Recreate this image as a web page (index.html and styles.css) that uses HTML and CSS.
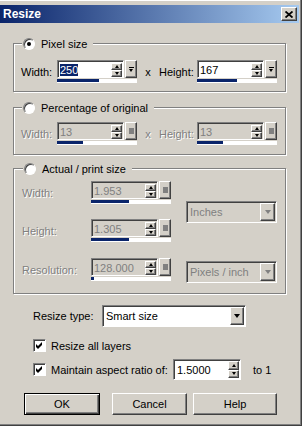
FILE: index.html
```html
<!DOCTYPE html>
<html lang="en">
<head>
    <meta charset="UTF-8">
    <title>Resize</title>
    <link rel="stylesheet" href="styles.css">
</head>
<body>
<div class="win">
    <div class="title">
        <span>Resize</span>
        <span class="close"><svg width="8" height="7" viewBox="0 0 8 7"><path d="M0.5 0.5L7.5 6.5M7.5 0.5L0.5 6.5" stroke="#000" stroke-width="1.8"/></svg></span>
    </div>
    <div class="body">
        <fieldset class="grp g1">
            <legend><span class="radio on"></span>Pixel size</legend>
            <div class="pair">
                <span class="lbl w1">Width:</span>
                <div class="ctl">
                    <div class="ctl-top">
                        <div class="field"><span class="val"><span class="sel">250</span></span><span class="spin"><b class="up"></b><b class="dn"></b></span></div>
                        <span class="pop"></span>
                    </div>
                    <div class="bar"><i style="width:42px"></i></div>
                </div>
                <span class="times">x</span>
                <span class="lbl w2">Height:</span>
                <div class="ctl">
                    <div class="ctl-top">
                        <div class="field"><span class="val">167</span><span class="spin"><b class="up"></b><b class="dn"></b></span></div>
                        <span class="pop"></span>
                    </div>
                    <div class="bar"><i style="width:40px"></i></div>
                </div>
            </div>
        </fieldset>

        <fieldset class="grp g2">
            <legend><span class="radio"></span>Percentage of original</legend>
            <div class="pair off">
                <span class="lbl w1">Width:</span>
                <div class="ctl">
                    <div class="ctl-top">
                        <div class="field"><span class="val">13</span><span class="spin"><b class="up"></b><b class="dn"></b></span></div>
                        <span class="pop"></span>
                    </div>
                    <div class="bar"><i style="width:26px"></i></div>
                </div>
                <span class="times">x</span>
                <span class="lbl w2">Height:</span>
                <div class="ctl">
                    <div class="ctl-top">
                        <div class="field"><span class="val">13</span><span class="spin"><b class="up"></b><b class="dn"></b></span></div>
                        <span class="pop"></span>
                    </div>
                    <div class="bar"><i style="width:26px"></i></div>
                </div>
            </div>
        </fieldset>

        <fieldset class="grp g3">
            <legend><span class="radio"></span>Actual / print size</legend>
            <div class="g3-body off">
                <div class="g3-left">
                    <div class="g3-row">
                        <span class="lbl w3">Width:</span>
                        <div class="ctl">
                            <div class="ctl-top">
                                <div class="field"><span class="val">1.953</span><span class="spin"><b class="up"></b><b class="dn"></b></span></div>
                                <span class="pop"></span>
                            </div>
                            <div class="bar"><i style="width:38px"></i></div>
                        </div>
                    </div>
                    <div class="g3-row">
                        <span class="lbl w3">Height:</span>
                        <div class="ctl">
                            <div class="ctl-top">
                                <div class="field"><span class="val">1.305</span><span class="spin"><b class="up"></b><b class="dn"></b></span></div>
                                <span class="pop"></span>
                            </div>
                            <div class="bar"><i style="width:38px"></i></div>
                        </div>
                    </div>
                    <div class="g3-row res">
                        <span class="lbl w3">Resolution:</span>
                        <div class="ctl">
                            <div class="ctl-top">
                                <div class="field"><span class="val">128.000</span><span class="spin"><b class="up"></b><b class="dn"></b></span></div>
                                <span class="pop"></span>
                            </div>
                            <div class="bar"><i style="width:3px"></i></div>
                        </div>
                    </div>
                </div>
                <div class="g3-right">
                    <div class="combo combo-off unit"><span class="txt">Inches</span><span class="arrow"></span></div>
                    <div class="combo combo-off unit"><span class="txt">Pixels / inch</span><span class="arrow"></span></div>
                </div>
            </div>
        </fieldset>

        <div class="type-row">
            <span class="type-lbl">Resize type:</span>
            <div class="combo type"><span class="txt">Smart size</span><span class="arrow"></span></div>
        </div>

        <div class="chk-row">
            <span class="chk"><svg width="7" height="7" viewBox="0 0 7 7"><path d="M0 2L2 4L6 0V3L2 7L0 5Z"/></svg></span>
            <span class="chk-lbl">Resize all layers</span>
        </div>

        <div class="chk-row aspect">
            <span class="chk"><svg width="7" height="7" viewBox="0 0 7 7"><path d="M0 2L2 4L6 0V3L2 7L0 5Z"/></svg></span>
            <span class="chk-lbl aspect-lbl">Maintain aspect ratio of:</span>
            <div class="spin-in"><span class="val">1.5000</span><span class="spin"><b class="up"></b><b class="dn"></b></span></div>
            <span class="to">to 1</span>
        </div>

        <div class="btns">
            <span class="btn ok">OK</span>
            <span class="btn cancel">Cancel</span>
            <span class="btn help">Help</span>
        </div>
    </div>
</div>
</body>
</html>
```

FILE: styles.css
```css
* {
    margin: 0;
    padding: 0;
    box-sizing: border-box;
}

body {
    background: #d4d0c8;
    font: 11px "Liberation Sans", Arial, sans-serif;
    color: #000;
}

.win {
    width: 302px;
    height: 426px;
    padding: 5px 2px 0 0;
    border-right: 1px solid #404040;
    border-bottom: 1px solid #404040;
    box-shadow: inset -1px -1px #808080, inset 0 1px #fff;
}

.title {
    height: 18px;
    display: flex;
    align-items: center;
    justify-content: space-between;
    padding: 0 2px 0 3px;
    background: linear-gradient(to right, #0a246a, #a6caf0);
    color: #fff;
    font-weight: bold;
    font-size: 12px;
}

.close {
    width: 16px;
    height: 14px;
    display: flex;
    align-items: center;
    justify-content: center;
    background: #d4d0c8;
    border: 1px solid;
    border-color: #fff #404040 #404040 #fff;
    box-shadow: inset -1px -1px #808080;
}

.body {
    padding: 14px 0 0 13px;
}

/* group boxes */
.grp {
    width: 273px;
    min-width: 0;
    border: 1px solid #808080;
    box-shadow: 1px 1px #fff, inset 1px 1px #fff;
}

.grp legend {
    display: flex;
    align-items: center;
    gap: 6px;
    height: 13px;
    margin-left: 1px;
    padding: 0 6px 0 1px;
    background: #d4d0c8;
}

.g1 {
    padding: 10px 0 8px 7px;
}

.g2 {
    margin-top: 9px;
    padding: 8px 0 9px 7px;
}

.g3 {
    margin-top: 7px;
    padding: 6px 0 10px 8px;
}

.radio {
    width: 12px;
    height: 12px;
    border-radius: 50%;
    background: #fff;
    border: 1px solid;
    border-color: #808080 #fff #fff #808080;
    box-shadow: inset 1px 1px #404040;
    display: flex;
    align-items: center;
    justify-content: center;
}

.radio.on::after {
    content: "";
    width: 4px;
    height: 4px;
    border-radius: 50%;
    background: #000;
}

.pair {
    display: flex;
    align-items: center;
}

.w1 { width: 36px; }
.w2 { width: 38px; }
.w3 { width: 69px; }

.times {
    width: 22px;
    text-align: center;
}

.off .lbl,
.off .times {
    color: #808080;
    text-shadow: 1px 1px #fff;
}

/* number field with spinner and slider popout */
.ctl {
    width: 80px;
    height: 23px;
    display: flex;
    flex-direction: column;
}

.ctl-top {
    display: flex;
    height: 18px;
}

.field {
    flex: 1;
    display: flex;
    align-items: center;
    background: #fff;
    border: 1px solid;
    border-color: #808080 #fff #fff #808080;
    box-shadow: inset 1px 1px #404040;
    padding: 1px 1px 0 2px;
}

.val {
    flex: 1;
    line-height: 12px;
}

.sel {
    background: #0a246a;
    color: #fff;
}

.spin {
    display: flex;
    flex-direction: column;
    width: 11px;
    height: 14px;
}

.spin b {
    flex: 1;
    display: flex;
    align-items: center;
    justify-content: center;
    background: #d4d0c8;
    border: 1px solid;
    border-color: #fff #404040 #404040 #fff;
    box-shadow: inset -1px -1px #808080;
}

.up::before {
    content: "";
    border-style: solid;
    border-color: transparent transparent #000;
    border-width: 0 2.5px 3px;
}

.dn::before {
    content: "";
    border-style: solid;
    border-color: #000 transparent transparent;
    border-width: 3px 2.5px 0;
}

.pop {
    width: 12px;
    margin-left: 1px;
    display: flex;
    flex-direction: column;
    align-items: center;
    justify-content: center;
    gap: 1px;
    background: #d4d0c8;
    border: 1px solid;
    border-color: #fff #404040 #404040 #fff;
    box-shadow: inset -1px -1px #808080;
}

.pop::before {
    content: "";
    width: 5px;
    height: 1px;
    background: #000;
}

.pop::after {
    content: "";
    border-style: solid;
    border-color: #000 transparent transparent;
    border-width: 3px 2.5px 0;
}

.off .pop::before {
    width: 5px;
    height: 6px;
    background: #808080;
}

.off .pop::after {
    display: none;
}

.bar {
    height: 5px;
    border-top: 1px solid #d4d0c8;
    background: #fff;
}

.bar i {
    display: block;
    height: 3px;
    background: #0a246a;
}

.off .field {
    background: #d4d0c8;
}

.off .val {
    color: #808080;
}

/* actual size group */
.g3-body {
    display: flex;
}

.g3-left {
    display: flex;
    flex-direction: column;
    gap: 15px;
}

.g3-row {
    display: flex;
    align-items: center;
}

.g3-row.res {
    margin-top: 1px;
}

.g3-right {
    display: flex;
    flex-direction: column;
    gap: 38px;
    margin: 20px 0 0 15px;
}

/* drop-down lists */
.combo {
    height: 22px;
    display: flex;
    align-items: center;
    padding: 1px;
    background: #fff;
    border: 1px solid;
    border-color: #808080 #fff #fff #808080;
    box-shadow: inset 1px 1px #404040;
}

.combo .txt {
    flex: 1;
    padding-left: 2px;
}

.combo .arrow {
    width: 15px;
    height: 18px;
    display: flex;
    align-items: center;
    justify-content: center;
    background: #d4d0c8;
    border: 1px solid;
    border-color: #fff #404040 #404040 #fff;
    box-shadow: inset -1px -1px #808080;
}

.combo .arrow::before {
    content: "";
    border-style: solid;
    border-color: #000 transparent transparent;
    border-width: 4px 3.5px 0;
}

.combo-off {
    background: #d4d0c8;
}

.combo-off .txt {
    color: #808080;
}

.combo-off .arrow::before {
    border-top-color: #808080;
}

.unit {
    width: 91px;
}

.type-row {
    display: flex;
    align-items: center;
    margin-top: 11px;
    padding-left: 20px;
}

.type-lbl {
    width: 69px;
}

.type {
    width: 144px;
}

.type .arrow {
    width: 14px;
}

/* check boxes */
.chk-row {
    display: flex;
    align-items: center;
    margin-top: 12px;
    padding-left: 20px;
}

.chk-row.aspect {
    margin-top: 7px;
}

.chk {
    width: 13px;
    height: 13px;
    display: flex;
    align-items: center;
    justify-content: center;
    background: #fff;
    border: 1px solid;
    border-color: #808080 #fff #fff #808080;
    box-shadow: inset 1px 1px #404040;
}

.chk-lbl {
    margin-left: 5px;
}

.aspect-lbl {
    width: 122px;
}

.spin-in {
    width: 68px;
    height: 21px;
    display: flex;
    align-items: center;
    padding: 1px 1px 1px 3px;
    background: #fff;
    border: 1px solid;
    border-color: #808080 #fff #fff #808080;
    box-shadow: inset 1px 1px #404040;
}

.spin-in .spin {
    width: 11px;
    height: 17px;
}

.to {
    margin-left: 12px;
}

/* buttons */
.btns {
    display: flex;
    margin-top: 13px;
    padding-left: 11px;
}

.btn {
    height: 22px;
    display: flex;
    align-items: center;
    justify-content: center;
    border: 1px solid;
    border-color: #fff #404040 #404040 #fff;
    box-shadow: inset -1px -1px #808080;
}

.ok {
    width: 76px;
    border-color: #000;
    box-shadow: inset 1px 1px #fff, inset -1px -1px #404040, inset -2px -2px #808080;
}

.cancel {
    width: 75px;
    margin-left: 12px;
}

.help {
    width: 84px;
    margin-left: 6px;
}
```
